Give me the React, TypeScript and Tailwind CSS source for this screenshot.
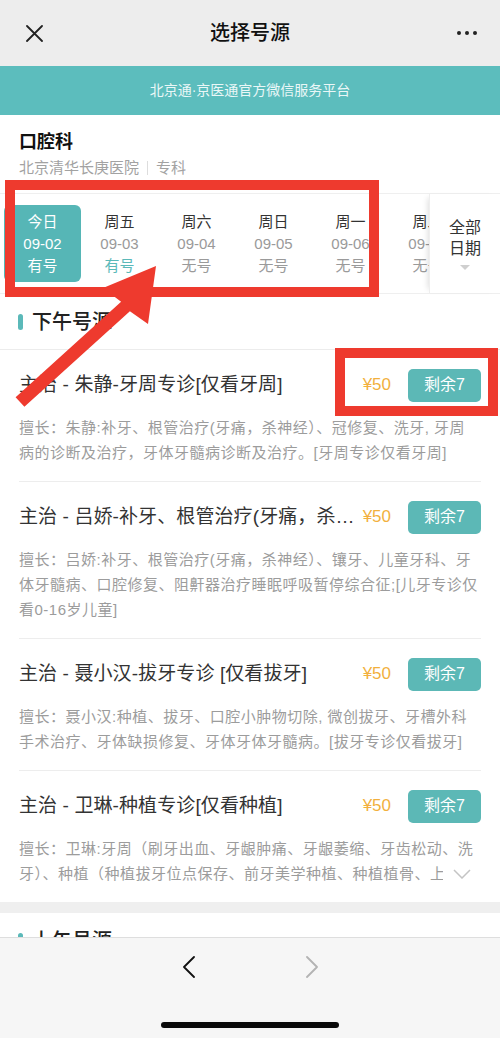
import React from 'react';

const dates = [
  { day: '今日', date: '09-02', status: '有号', active: true },
  { day: '周五', date: '09-03', status: '有号' },
  { day: '周六', date: '09-04', status: '无号' },
  { day: '周日', date: '09-05', status: '无号' },
  { day: '周一', date: '09-06', status: '无号' },
  { day: '周二', date: '09-07', status: '无号' },
];

const doctors = [
  {
    title: '主治 - 朱静-牙周专诊[仅看牙周]',
    lines: [
      '擅长：朱静:补牙、根管治疗(牙痛，杀神经）、冠修复、洗牙, 牙周',
      '病的诊断及治疗，牙体牙髓病诊断及治疗。[牙周专诊仅看牙周]',
    ],
  },
  {
    title: '主治 - 吕娇-补牙、根管治疗(牙痛，杀神经）、镶牙',
    lines: [
      '擅长：吕娇:补牙、根管治疗(牙痛，杀神经）、镶牙、儿童牙科、牙',
      '体牙髓病、口腔修复、阻鼾器治疗睡眠呼吸暂停综合征;[儿牙专诊仅',
      '看0-16岁儿童]',
    ],
  },
  {
    title: '主治 - 聂小汉-拔牙专诊 [仅看拔牙]',
    lines: [
      '擅长：聂小汉:种植、拔牙、口腔小肿物切除, 微创拔牙、牙槽外科',
      '手术治疗、牙体缺损修复、牙体牙体牙髓病。[拔牙专诊仅看拔牙]',
    ],
  },
  {
    title: '主治 - 卫琳-种植专诊[仅看种植]',
    lines: [
      '擅长：卫琳:牙周（刷牙出血、牙龈肿痛、牙龈萎缩、牙齿松动、洗',
      '牙）、种植（种植拔牙位点保存、前牙美学种植、种植植骨、上颌窦提升）',
    ],
    collapsed: true,
  },
];

const SectionTitle = ({ text }: { text: string }) => (
  <div className="h-[56px] flex items-center pl-[18px] border-b border-[#ececec]">
    <span className="w-[5px] h-[16px] rounded-full bg-[#5bb9b9] mr-[9px]" />
    <span className="text-[20px] font-medium text-[#222]">{text}</span>
  </div>
);

export default function App() {
  return (
    <div className="relative w-[500px] h-[1038px] overflow-hidden flex flex-col bg-white font-['Liberation_Sans','Noto_Sans_CJK_SC',sans-serif]">
      {/* nav bar */}
      <div className="h-[66px] shrink-0 bg-[#ededed] grid grid-cols-[80px_1fr_80px] items-center">
        <div className="pl-[26px] pt-[1px]">
          <svg width="17" height="17" viewBox="0 0 17 17" fill="none" stroke="#222" strokeWidth={1.8} strokeLinecap="round">
            <path d="M1 1l15 15M16 1L1 16" />
          </svg>
        </div>
        <div className="text-center text-[20px] font-medium text-[#111]">选择号源</div>
        <div className="flex justify-end gap-[4px] pr-[23px]">
          <span className="w-[4px] h-[4px] rounded-full bg-[#222]" />
          <span className="w-[4px] h-[4px] rounded-full bg-[#222]" />
          <span className="w-[4px] h-[4px] rounded-full bg-[#222]" />
        </div>
      </div>

      {/* banner */}
      <div className="h-[49px] shrink-0 bg-[#5cbdbd] flex items-center justify-center text-[14px] text-[#eaf7f7]">
        北京通·京医通官方微信服务平台
      </div>

      <div className="flex-1 min-h-0 overflow-hidden">
        {/* department */}
        <div className="pt-[16px] pb-[15px] px-[19px]">
          <div className="text-[18px] leading-[22px] font-bold text-[#111]">口腔科</div>
          <div className="mt-[5px] text-[15px] leading-[20px] text-[#a2a2a2] flex items-center">
            北京清华长庚医院
            <span className="mx-[8px] w-px h-[14px] bg-[#dddddd]" />
            专科
          </div>
        </div>

        {/* date strip */}
        <div className="flex border-y border-[#efefef]">
          <div className="w-[429px] overflow-hidden">
            <div className="flex pl-[4px] py-[11px]">
              {dates.map((d) => (
                <div
                  key={d.date}
                  className={`w-[77px] h-[77px] shrink-0 rounded-[6px] flex flex-col items-center justify-center text-[15px] leading-[22px] ${d.active ? 'bg-[#56b6b6]' : ''}`}
                >
                  <span className={d.active ? 'text-white' : 'text-[#333]'}>{d.day}</span>
                  <span className={d.active ? 'text-white' : 'text-[#9a9a9a]'}>{d.date}</span>
                  <span className={d.active ? 'text-white' : d.status === '有号' ? 'text-[#5bb9b9]' : 'text-[#9a9a9a]'}>{d.status}</span>
                </div>
              ))}
            </div>
          </div>
          <div className="flex-1 flex flex-col items-center justify-center border-l border-[#eeeeee] shadow-[-5px_0_6px_-4px_rgba(0,0,0,0.14)]">
            <span className="text-[16px] leading-[21px] text-[#333]">全部</span>
            <span className="text-[16px] leading-[21px] text-[#333]">日期</span>
            <span className="mt-[6px] w-0 h-0 border-x-[5px] border-x-transparent border-t-[5px] border-t-[#cfcfcf]" />
          </div>
        </div>

        <SectionTitle text="下午号源" />

        <div className="px-[19px]">
          {doctors.map((doc, i) => (
            <div key={i} className={`pt-[19px] pb-[16px] ${i < doctors.length - 1 ? 'border-b border-[#ededed]' : ''}`}>
              <div className="h-[32px] flex items-center">
                <div className="flex-1 min-w-0 truncate text-[19px] tracking-[0.1px] text-[#333]">{doc.title}</div>
                <span className="ml-[4px] text-[17px] text-[#f2b03d]">¥50</span>
                <span className="ml-[17px] w-[73px] h-[33px] rounded-[5px] bg-[#5cb8b6] text-white text-[16px] flex items-center justify-center">
                  剩余7
                </span>
              </div>
              <div className="relative mt-[14px] text-[15px] leading-[25px] tracking-[0.5px] text-[#9c9c9c]">
                {doc.lines.map((line, j) => (
                  <div key={j} className={`whitespace-nowrap ${doc.collapsed ? 'overflow-hidden' : ''}`}>{line}</div>
                ))}
                {doc.collapsed && (
                  <div className="absolute right-0 bottom-0 w-[38px] h-[25px] bg-white flex items-center justify-end pr-[10px]">
                    <svg width="18" height="10" viewBox="0 0 18 10" fill="none" stroke="#c4c4c4" strokeWidth={1.5}>
                      <path d="M1 1l8 8 8-8" />
                    </svg>
                  </div>
                )}
              </div>
            </div>
          ))}
        </div>

        <div className="h-[11px] bg-[#efefef]" />
        <SectionTitle text="上午号源" />
      </div>

      {/* bottom toolbar */}
      <div className="h-[101px] shrink-0 bg-[#f6f6f6] border-t border-[#dedede] flex flex-col items-center">
        <div className="h-[58px] w-full flex items-center justify-center gap-[109px]">
          <svg width="14" height="22" viewBox="0 0 14 22" fill="none" stroke="#111" strokeWidth={1.8} strokeLinecap="round" strokeLinejoin="round">
            <path d="M12 1L2 11l10 10" />
          </svg>
          <svg width="14" height="22" viewBox="0 0 14 22" fill="none" stroke="#b3b3b3" strokeWidth={1.8} strokeLinecap="round" strokeLinejoin="round">
            <path d="M2 1l10 10-10 10" />
          </svg>
        </div>
        <div className="mt-[26px] w-[178px] h-[6px] rounded-full bg-[#0a0a0a]" />
      </div>

      {/* red annotations */}
      <div className="absolute left-[5px] top-[180px] w-[374px] h-[117px] border-[10px] border-[#ee3a2e] pointer-events-none" />
      <div className="absolute left-[335px] top-[348px] w-[163px] h-[68px] border-[10px] border-[#ee3a2e] pointer-events-none" />
      <svg className="absolute left-0 top-0 pointer-events-none" width="500" height="1038" viewBox="0 0 500 1038">
        <polygon
          fill="#ee3a2e"
          points="156,266 148,324 129.9,311.3 24.4,406.8 15.6,397.2 121.1,301.7 103,288"
        />
      </svg>
    </div>
  );
}
